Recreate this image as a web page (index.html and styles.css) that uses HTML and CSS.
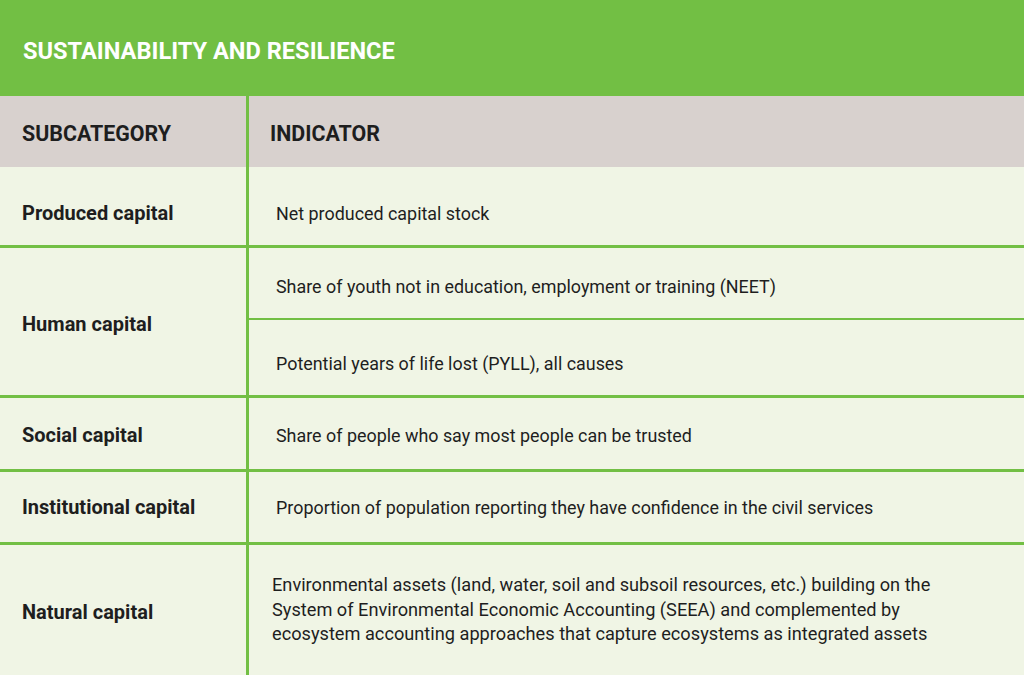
FILE: index.html
```html
<!DOCTYPE html>
<html lang="en">
<head>
<meta charset="utf-8">
<title>Sustainability and resilience</title>
<link rel="stylesheet" href="styles.css">
</head>
<body>
<div class="page">
  <header class="title">SUSTAINABILITY AND RESILIENCE</header>
  <div class="row head">
    <div class="cell sub">SUBCATEGORY</div>
    <div class="cell ind">INDICATOR</div>
  </div>
  <div class="row r-produced">
    <div class="cell sub">Produced capital</div>
    <div class="cell ind">Net produced capital stock</div>
  </div>
  <div class="row r-human">
    <div class="cell sub">Human capital</div>
    <div class="stack">
      <div class="cell ind s1">Share of youth not in education, employment or training (NEET)</div>
      <div class="cell ind s2">Potential years of life lost (PYLL), all causes</div>
    </div>
  </div>
  <div class="row r-social">
    <div class="cell sub">Social capital</div>
    <div class="cell ind">Share of people who say most people can be trusted</div>
  </div>
  <div class="row r-inst">
    <div class="cell sub">Institutional capital</div>
    <div class="cell ind">Proportion of population reporting they have confidence in the civil services</div>
  </div>
  <div class="row r-natural">
    <div class="cell sub">Natural capital</div>
    <div class="cell ind multi">Environmental assets (land, water, soil and subsoil resources, etc.) building on the<br>System of Environmental Economic Accounting (SEEA) and complemented by<br>ecosystem accounting approaches that capture ecosystems as integrated assets</div>
  </div>
</div>
</body>
</html>
```

FILE: styles.css
```css
html, body {
  margin: 0;
  padding: 0;
  background: #f0f5e5;
}
body {
  font-family: Roboto, "Liberation Sans", sans-serif;
  color: #1e1e1e;
}
.page {
  width: 1024px;
  height: 675px;
  overflow: hidden;
  display: flex;
  flex-direction: column;
}
.title {
  height: 96px;
  flex: none;
  background: #72bf44;
  color: #ffffff;
  font-weight: 700;
  font-size: 23.6px;
  display: flex;
  align-items: center;
  padding: 6px 0 0 23px;
  box-sizing: border-box;
}
.row {
  display: grid;
  grid-template-columns: 246px 1fr;
  column-gap: 3px;
  background: #72bf44;
  border-bottom: 3px solid #72bf44;
  flex: none;
}
.cell {
  background: #f0f5e5;
  display: flex;
  align-items: center;
  box-sizing: border-box;
}
.sub {
  padding-left: 22px;
  font-weight: 700;
  font-size: 20px;
}
.ind {
  padding-left: 27px;
  font-size: 17.9px;
}
.head {
  border-bottom: 0;
  height: 71px;
}
.head .cell {
  background: #d8d1ce;
  font-weight: 700;
  font-size: 21.4px;
  padding-top: 3px;
}
.head .ind {
  padding-left: 21px;
}
.r-produced {
  height: 78px;
}
.r-produced .cell {
  padding-top: 14px;
}
.r-human {
  height: 147px;
}
.r-human .sub {
  padding-top: 5px;
}
.stack {
  display: flex;
  flex-direction: column;
  gap: 2px;
}
.s1 {
  height: 70px;
  padding-top: 6px;
}
.s2 {
  flex: 1;
  padding-top: 11px;
}
.r-social {
  height: 71px;
}
.r-social .cell {
  padding-top: 3px;
}
.r-inst {
  height: 70px;
}
.r-natural {
  flex: 1;
  border-bottom: 0;
}
.r-natural .sub {
  padding-top: 4px;
}
.multi {
  padding-left: 23px;
  padding-top: 0;
  font-size: 18.2px;
  line-height: 24.5px;
}
```
